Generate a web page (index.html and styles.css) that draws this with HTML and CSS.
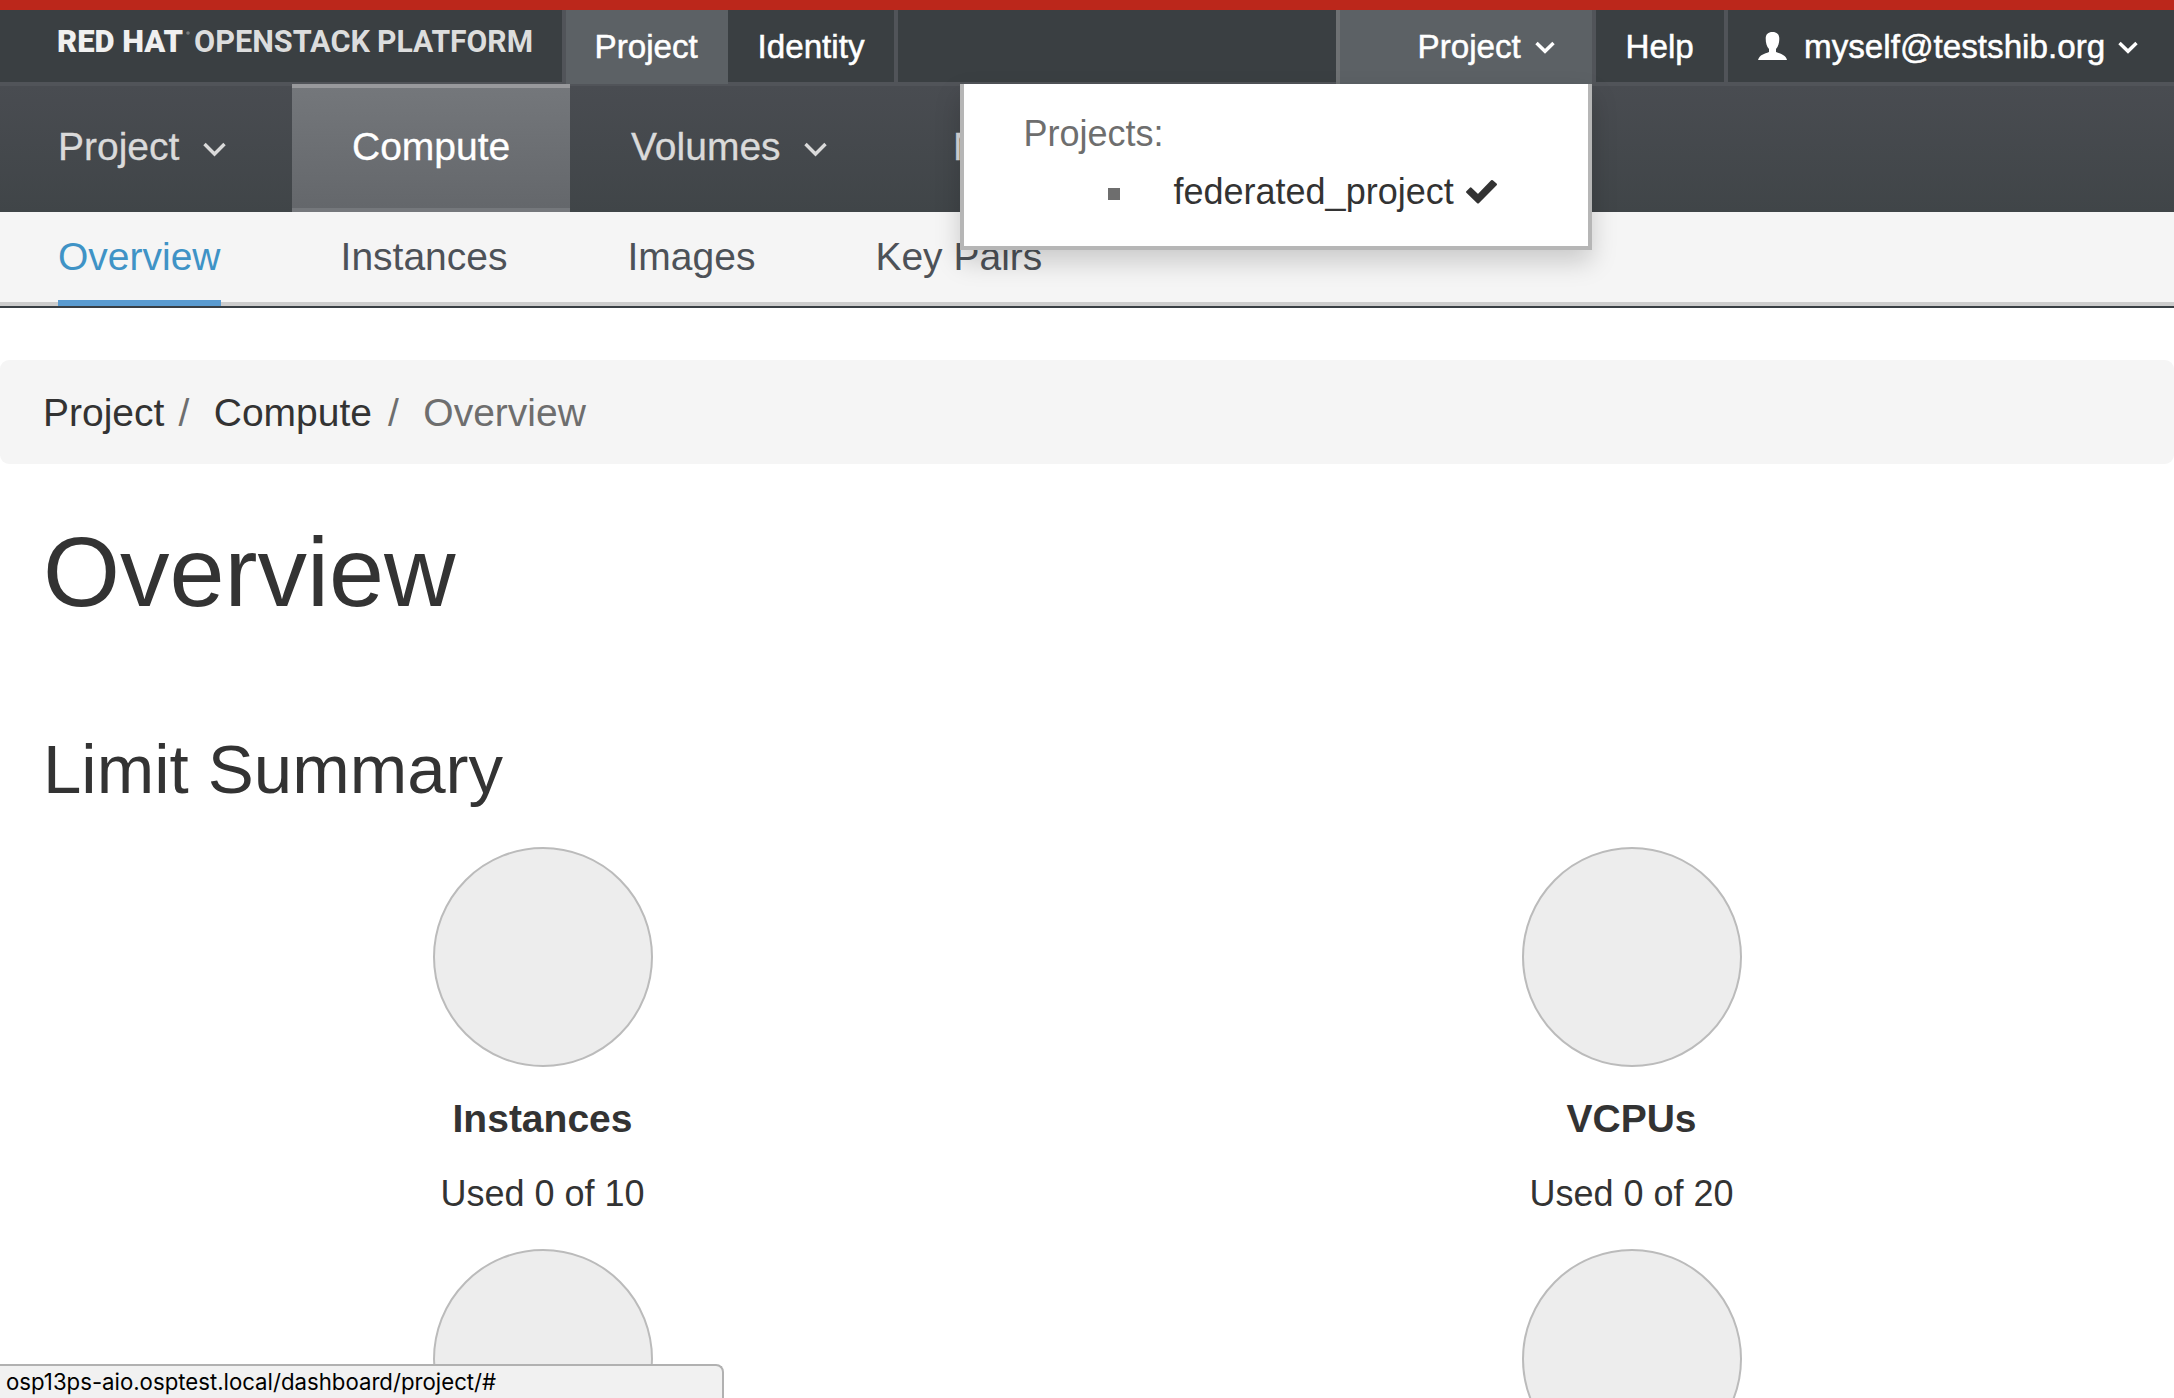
FILE: index.html
```html
<!DOCTYPE html>
<html lang="en">
<head>
<meta charset="utf-8">
<title>Overview - Red Hat OpenStack Platform</title>
<link rel="stylesheet" href="styles.css">
</head>
<body>
<header>
  <div class="topbar">
    <div class="brand">
      <svg width="474" height="24" viewBox="0 0 474 24" role="img">
        <text class="brand-heavy" x="-1" y="22" textLength="126" lengthAdjust="spacingAndGlyphs">RED HAT</text>
        <text class="brand-light" x="136" y="22" textLength="176" lengthAdjust="spacingAndGlyphs">OPENSTACK</text>
        <text class="brand-light" x="319" y="22" textLength="156" lengthAdjust="spacingAndGlyphs">PLATFORM</text>
        <circle class="brand-mark" cx="130" cy="3" r="1.800"/>
      </svg>
    </div>
    <a class="top-item top-project active">Project</a>
    <a class="top-item top-identity">Identity</a>
    <div class="spacer"></div>
    <div class="top-item switcher">
      <span>Project</span>
      <svg class="caret" width="20" height="13" viewBox="0 0 20 13"><path d="M1.500 2l8.500 8.300L18.500 2"/></svg>
      <div class="dropdown">
        <div class="dropdown-title">Projects:</div>
        <div class="dropdown-item">
          <i class="bullet"></i>
          <span>federated_project</span>
          <svg class="check" width="31" height="24" viewBox="0 0 31 24"><path d="M1.200 12l3.500-3.500 7.300 7L26 1.200l3.800 3.300L12 22.300z"/></svg>
        </div>
      </div>
    </div>
    <a class="top-item help">Help</a>
    <a class="top-item user">
      <svg class="person" width="29" height="28" viewBox="0 0 29 28"><path d="M14.500 0C18.800 0 21.300 2.200 21.300 6.500c0 4.500-1 8.300-3.300 10.500v3c4.500 2 9.500 2.500 11 8H0c1.500-5.500 6.500-6 11-8v-3C8.700 14.800 7.700 11 7.700 6.500 7.700 2.200 10.200 0 14.500 0z"/></svg>
      <span>myself@testshib.org</span>
      <svg class="caret" width="20" height="13" viewBox="0 0 20 13"><path d="M1.500 2l8.500 8.300L18.500 2"/></svg>
    </a>
  </div>
  <nav class="mainnav">
    <a class="main-item first">Project <svg class="caret" width="23" height="14" viewBox="0 0 23 14"><path d="M1.500 2l10 10 10-10"/></svg></a>
    <a class="main-item active">Compute</a>
    <a class="main-item volumes">Volumes <svg class="caret" width="23" height="14" viewBox="0 0 23 14"><path d="M1.500 2l10 10 10-10"/></svg></a>
    <a class="main-item">N</a>
  </nav>
  <nav class="subnav">
    <a class="active">Overview</a>
    <a>Instances</a>
    <a>Images</a>
    <a>Key Pairs</a>
  </nav>
</header>
<main>
  <ol class="breadcrumb">
    <li>Project</li>
    <li>Compute</li>
    <li class="current">Overview</li>
  </ol>
  <h1>Overview</h1>
  <h2>Limit Summary</h2>
  <section class="quotas">
    <div class="quota"><div class="pie"></div><strong>Instances</strong><span>Used 0 of 10</span></div>
    <div class="quota"><div class="pie"></div><strong>VCPUs</strong><span>Used 0 of 20</span></div>
    <div class="quota"><div class="pie"></div></div>
    <div class="quota"><div class="pie"></div></div>
  </section>
</main>
<div class="statusbar">osp13ps-aio.osptest.local/dashboard/project/#</div>
</body>
</html>
```
FILE: styles.css
```css
* { box-sizing: border-box; }

html { overflow: hidden; }

body {
  display: flex;
  flex-direction: column;
  margin: 0;
  height: 1398px;
  overflow: hidden;
  background: #fff;
  color: #333;
  font-family: "Liberation Sans", Arial, sans-serif;
  font-size: 36px;
}

header { flex: none; }
main { flex: 1; min-height: 0; overflow: hidden; }

svg { display: block; flex: none; overflow: visible; }

.caret path { fill: none; stroke: currentColor; stroke-width: 3.4; }

/* Top bar */
.topbar {
  display: flex;
  height: 86px;
  border-top: 10px solid #bb271b;
  border-bottom: 4px solid #515459;
  background: #3a3f42;
  color: #fff;
  font-size: 33.2px;
  line-height: 73px;
  -webkit-text-stroke: .5px currentColor;
}

.brand {
  width: 566px;
  padding: 20px 0 0 58px;
  border-right: 4px solid #515459;
  fill: #f0f0f0;
  font-family: Roboto, sans-serif;
  font-size: 31px;
  -webkit-text-stroke: 0;
}
.brand-heavy { font-weight: 900; }
.brand-light { font-weight: 700; fill: #dcdddd; }
.brand-mark { fill: #777b7d; }

.top-item { display: flex; height: 72px; white-space: nowrap; }
.top-item.active { height: 74px; background: #5c6165; }
.top-project { width: 162px; padding-left: 28.500px; }
.top-identity { width: 170px; padding-left: 29.500px; border-right: 4px solid #515459; }
.spacer { flex: 1; }

.switcher {
  position: relative;
  width: 260px;
  height: 74px;
  padding-left: 77.500px;
  border-left: 4px solid #6e7173;
  border-right: 4px solid #515459;
  background: #5c6165;
}
.switcher .caret { margin: 31px 0 0 14px; }
.help { width: 132px; padding-left: 29.500px; border-right: 4px solid #515459; }
.user { width: 446px; padding-left: 30px; }
.user .person { margin: 22px 17px 0 0; fill: #fff; }
.user .caret { margin: 31px 0 0 13px; }

/* Project switcher menu, laid over the navigation */
.dropdown {
  position: absolute;
  z-index: 2;
  top: 74px;
  right: 0;
  width: 632px;
  height: 166px;
  padding: 28px 0 0 58px;
  border: 4px solid #b6b6b6;
  border-top: 0;
  background: #fff;
  box-shadow: 0 12px 24px rgba(0, 0, 0, .175);
  color: #333;
  font-size: 36px;
  line-height: 44px;
  -webkit-text-stroke: 0;
}
.dropdown-title { padding-left: 1.500px; color: #6e6e6e; }
.dropdown-item { display: flex; margin-top: 14px; }
.bullet { width: 12px; height: 12px; margin: 18px 53.500px 0 86px; background: #6e6e6e; }
.check { margin: 10px 0 0 12px; }
.check path { fill: #333; stroke: #333; stroke-width: 2.400; stroke-linejoin: round; }

/* Main navigation */
.mainnav {
  display: flex;
  height: 126px;
  background: linear-gradient(#494c51, #404548);
  color: #dadada;
  font-size: 39px;
  line-height: 121px;
  -webkit-text-stroke: .3px currentColor;
}
.main-item { display: flex; padding: 0 58px 0 61px; white-space: nowrap; }
.main-item.first { width: 292px; padding-left: 58px; }
.main-item.volumes { width: 322px; }
.main-item .caret { margin: 56px 0 0 23px; }
.main-item.first .caret { margin-left: 24px; }
.main-item.active {
  width: 278px;
  height: 128px;
  margin-top: -2px;
  padding-left: 60px;
  border-top: 4px solid #98999c;
  border-bottom: 4px solid #75787c;
  background: linear-gradient(#74777b, #64676b);
  color: #fff;
  line-height: 117px;
}

/* Secondary navigation */
.subnav {
  display: flex;
  gap: 120px;
  height: 96px;
  padding-left: 58px;
  border-bottom: 2px solid #393f44;
  background: linear-gradient(#f5f5f5 90px, #ccc 90px);
  color: #4d5258;
  font-size: 39px;
  line-height: 89px;
}
.subnav .active { height: 94px; border-bottom: 6px solid #5a9bd0; color: #3f93c6; }

/* Page content */
.breadcrumb {
  display: flex;
  height: 104px;
  margin: 52px 0 0;
  padding: 0 43px;
  border-radius: 9px;
  background: #f5f5f5;
  font-size: 39px;
  line-height: 105px;
  list-style: none;
}
.breadcrumb li + li::before { content: "/"; padding: 0 24.500px 0 14px; color: #6e6e6e; }
.breadcrumb li + .current::before { padding-left: 16px; }
.breadcrumb .current { color: #6e6e6e; }

h1, h2 { padding-left: 43px; font-weight: 400; }
h1 { margin: 53px 0 0; font-size: 99px; line-height: 110px; }
h2 { margin: 105px 0 39px; font-size: 69px; line-height: 76px; }

.quotas { display: grid; grid-template-columns: 1fr 1fr; row-gap: 35px; margin: 0 -2px; }
.quota { display: flex; flex-direction: column; align-items: center; }
.pie { width: 220px; height: 220px; margin-left: 1px; border: 2px solid #bbb; border-radius: 50%; background: #ededed; }
.quota strong { margin-top: 30px; font-size: 39px; line-height: 43px; }
.quota span { margin-top: 34px; line-height: 40px; }

/* Browser link preview, laid over the page */
.statusbar {
  position: absolute;
  left: 0;
  bottom: 0;
  width: 724px;
  height: 34px;
  padding-left: 6px;
  border: 2px solid #b1b1b1;
  border-width: 2px 2px 0 0;
  border-radius: 0 8px 0 0;
  background: #f1f1f1;
  color: #000;
  font-family: Inter, sans-serif;
  font-size: 22.200px;
  line-height: 32px;
}
```
